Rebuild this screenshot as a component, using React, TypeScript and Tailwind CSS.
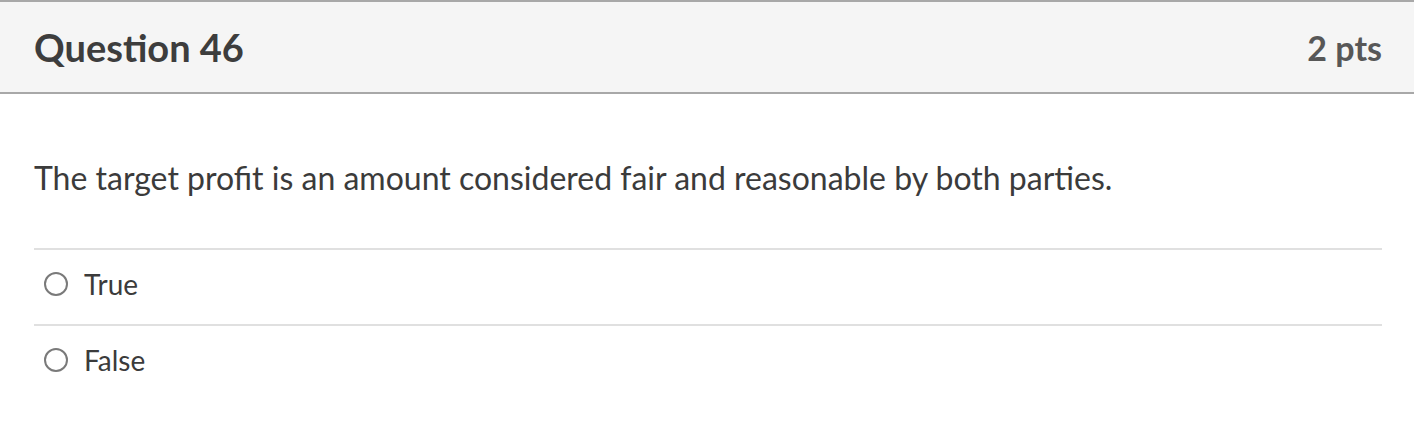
const answers = ["True", "False"];

export default function App() {
  return (
    <div className="w-[1414px] h-[438px] bg-white font-['Lato','Liberation_Sans',sans-serif] overflow-hidden">
      <div className="flex items-center justify-between h-[94px] bg-[#f5f5f5] border-t-2 border-b-2 border-[#a8a8a8] pl-[34px] pr-[32px]">
        <h2 className="text-[38px] font-bold text-[#3d3d3d]">Question 46</h2>
        <div className="text-[34px] font-bold text-[#575757]">2 pts</div>
      </div>
      <div className="pl-[34px] pr-[32px] pt-[62px]">
        <p className="text-[32px] text-[#3b3b3b] leading-[44px]">
          The target profit is an amount considered fair and reasonable by both parties.
        </p>
        <div className="mt-[48px]">
          {answers.map((a) => (
            <label
              key={a}
              className="flex items-center h-[76px] pb-[6px] border-t-2 border-[#e0e0e0]"
            >
              <span className="w-[24px] h-[24px] ml-[10px] mr-[16px] rounded-full border-2 border-[#7a7a7a] bg-white" />
              <span className="text-[28px] text-[#3b3b3b]">{a}</span>
            </label>
          ))}
        </div>
      </div>
    </div>
  );
}
